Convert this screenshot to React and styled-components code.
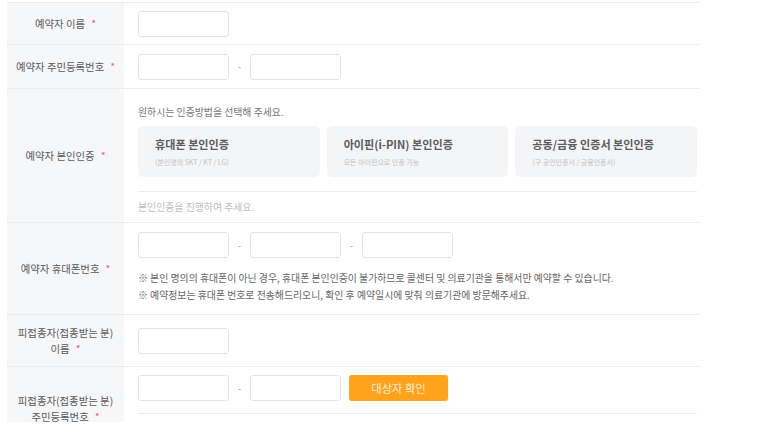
import React from "react";
import styled, { createGlobalStyle, css } from "styled-components";

const GlobalStyle = createGlobalStyle`
  * { box-sizing: border-box; }
  body {
    margin: 0;
    background: #fff;
    font-family: "Noto Sans CJK KR", "Noto Sans", sans-serif;
  }
`;

const Frame = styled.div`
  margin: 2px 0 0 7px;
  width: 693px;
  height: 420px;
  overflow: hidden;
`;

const Row = styled.div`
  display: grid;
  grid-template-columns: 117px 1fr;
  min-height: ${(p) => p.h}px;
  border-bottom: 1px solid #ececec;
  ${(p) =>
    p.first &&
    css`
      border-top: 1px solid #ececec;
    `}
`;

const Label = styled.div`
  background: #f6f7f9;
  display: flex;
  align-items: center;
  justify-content: center;
  text-align: center;
  font-size: 10.4px;
  line-height: 16px;
  color: #5a5a5a;
`;

const Star = styled.span`
  color: #ee5a6a;
  margin-left: 6px;
`;

const Cell = styled.div`
  display: flex;
  flex-direction: column;
  justify-content: ${(p) => (p.top ? "flex-start" : "center")};
  padding: ${(p) => p.pad || "0"};
  padding-left: 14px;
  padding-right: 3px;
`;

const Fields = styled.div`
  display: flex;
  align-items: center;
`;

const Input = styled.input`
  width: 91px;
  height: 26px;
  border: 1px solid #e4e4e4;
  border-radius: 3px;
  background: #fff;
  outline: none;
  padding: 0 6px;
`;

const Dash = styled.span`
  width: 21px;
  text-align: center;
  font-size: 9px;
  color: #999;
`;

const Guide = styled.div`
  font-size: 9.9px;
  line-height: 16px;
  color: #777;
`;

const Cards = styled.div`
  display: grid;
  grid-template-columns: repeat(3, 1fr);
  gap: 7px;
  margin-top: 6px;
`;

const Card = styled.div`
  height: 51px;
  background: #f4f5f7;
  border-radius: 5px;
  padding: 0 17px;
  display: flex;
  flex-direction: column;
  justify-content: center;
`;

const CardTitle = styled.div`
  font-size: 11.1px;
  font-weight: 700;
  line-height: 16px;
  color: #5c5c5c;
`;

const CardSub = styled.div`
  font-size: 7px;
  line-height: 9px;
  margin-top: 6px;
  color: #c2c2c2;
`;

const Divider = styled.div`
  border-top: 1px solid #ececec;
  margin-top: ${(p) => p.mt}px;
  padding-top: 7px;
  min-height: ${(p) => p.minH || 0}px;
`;

const Pending = styled.div`
  font-size: 9.9px;
  line-height: 16px;
  color: #bdbdbd;
`;

const Notes = styled.div`
  margin-top: 12px;
  font-size: 9.9px;
  line-height: 17px;
  color: #666;
`;

const CheckButton = styled.button`
  margin-left: 8px;
  width: 99px;
  height: 26px;
  border: none;
  border-radius: 3px;
  background: #ffa21c;
  color: rgba(255, 255, 255, 0.85);
  font-family: inherit;
  font-size: 11.3px;
  cursor: pointer;
`;

const certs = [
  { title: "휴대폰 본인인증", sub: "(본인명의 SKT / KT / LG)" },
  { title: "아이핀(i-PIN) 본인인증", sub: "모든 아이핀으로 인증 가능" },
  { title: "공동/금융 인증서 본인인증", sub: "(구 공인인증서 / 금융인증서)" },
];

const Required = ({ children }) => (
  <>
    {children}
    <Star>*</Star>
  </>
);

export default function App() {
  return (
    <>
      <GlobalStyle />
      <Frame>
        <Row first h={43}>
          <Label>
            <Required>예약자 이름</Required>
          </Label>
          <Cell>
            <Fields>
              <Input />
            </Fields>
          </Cell>
        </Row>

        <Row h={44}>
          <Label>
            <Required>예약자 주민등록번호</Required>
          </Label>
          <Cell>
            <Fields>
              <Input />
              <Dash>-</Dash>
              <Input type="password" />
            </Fields>
          </Cell>
        </Row>

        <Row h={134}>
          <Label>
            <Required>예약자 본인인증</Required>
          </Label>
          <Cell top pad="15px 0 6px">
            <Guide>원하시는 인증방법을 선택해 주세요.</Guide>
            <Cards>
              {certs.map((c) => (
                <Card key={c.title}>
                  <CardTitle>{c.title}</CardTitle>
                  <CardSub>{c.sub}</CardSub>
                </Card>
              ))}
            </Cards>
            <Divider mt={14}>
              <Pending>본인인증을 진행하여 주세요.</Pending>
            </Divider>
          </Cell>
        </Row>

        <Row h={92}>
          <Label>
            <Required>예약자 휴대폰번호</Required>
          </Label>
          <Cell top pad="9px 0 8px">
            <Fields>
              <Input />
              <Dash>-</Dash>
              <Input />
              <Dash>-</Dash>
              <Input />
            </Fields>
            <Notes>
              <div>
                ※ 본인 명의의 휴대폰이 아닌 경우, 휴대폰 본인인증이 불가하므로
                콜센터 및 의료기관을 통해서만 예약할 수 있습니다.
              </div>
              <div>
                ※ 예약정보는 휴대폰 번호로 전송해드리오니, 확인 후 예약일시에
                맞춰 의료기관에 방문해주세요.
              </div>
            </Notes>
          </Cell>
        </Row>

        <Row h={52}>
          <Label>
            <div>
              피접종자(접종받는 분)
              <br />
              <Required>이름</Required>
            </div>
          </Label>
          <Cell>
            <Fields>
              <Input />
            </Fields>
          </Cell>
        </Row>

        <Row h={84}>
          <Label>
            <div>
              피접종자(접종받는 분)
              <br />
              <Required>주민등록번호</Required>
            </div>
          </Label>
          <Cell top pad="8px 0 0">
            <Fields>
              <Input />
              <Dash>-</Dash>
              <Input type="password" />
              <CheckButton>대상자 확인</CheckButton>
            </Fields>
            <Divider mt={12} minH={36} />
          </Cell>
        </Row>
      </Frame>
    </>
  );
}
